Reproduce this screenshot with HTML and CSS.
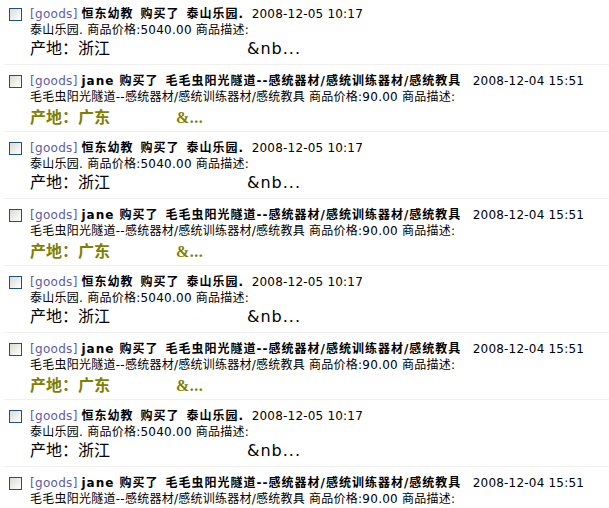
FILE: index.html
```html
<!DOCTYPE html>
<html>
<head>
<meta charset="utf-8">
<link rel="stylesheet" href="styles.css">
</head>
<body>
<ul class="list">
  <li class="item">
    <span class="cb"></span>
    <div class="body">
      <div class="title"><span class="tag">[goods]</span> <b>恒东幼教&ensp;购买了&ensp;泰山乐园.</b>&nbsp; <span class="date">2008-12-05 10:17</span></div>
      <div class="desc">泰山乐园. 商品价格:5040.00 商品描述:</div>
      <div class="detail plain"><span class="lead">产地：浙江</span>&amp;nb...</div>
    </div>
  </li>
  <li class="item">
    <span class="cb"></span>
    <div class="body">
      <div class="title"><span class="tag">[goods]</span> <b>jane 购买了&ensp;毛毛虫阳光隧道--感统器材/感统训练器材/感统教具</b>&nbsp;&nbsp; <span class="date">2008-12-04 15:51</span></div>
      <div class="desc">毛毛虫阳光隧道--感统器材/感统训练器材/感统教具 商品价格:90.00 商品描述:</div>
      <div class="detail olive"><span class="lead">产地：广东</span>&amp;...</div>
    </div>
  </li>
  <li class="item">
    <span class="cb"></span>
    <div class="body">
      <div class="title"><span class="tag">[goods]</span> <b>恒东幼教&ensp;购买了&ensp;泰山乐园.</b>&nbsp; <span class="date">2008-12-05 10:17</span></div>
      <div class="desc">泰山乐园. 商品价格:5040.00 商品描述:</div>
      <div class="detail plain"><span class="lead">产地：浙江</span>&amp;nb...</div>
    </div>
  </li>
  <li class="item">
    <span class="cb"></span>
    <div class="body">
      <div class="title"><span class="tag">[goods]</span> <b>jane 购买了&ensp;毛毛虫阳光隧道--感统器材/感统训练器材/感统教具</b>&nbsp;&nbsp; <span class="date">2008-12-04 15:51</span></div>
      <div class="desc">毛毛虫阳光隧道--感统器材/感统训练器材/感统教具 商品价格:90.00 商品描述:</div>
      <div class="detail olive"><span class="lead">产地：广东</span>&amp;...</div>
    </div>
  </li>
  <li class="item">
    <span class="cb"></span>
    <div class="body">
      <div class="title"><span class="tag">[goods]</span> <b>恒东幼教&ensp;购买了&ensp;泰山乐园.</b>&nbsp; <span class="date">2008-12-05 10:17</span></div>
      <div class="desc">泰山乐园. 商品价格:5040.00 商品描述:</div>
      <div class="detail plain"><span class="lead">产地：浙江</span>&amp;nb...</div>
    </div>
  </li>
  <li class="item">
    <span class="cb"></span>
    <div class="body">
      <div class="title"><span class="tag">[goods]</span> <b>jane 购买了&ensp;毛毛虫阳光隧道--感统器材/感统训练器材/感统教具</b>&nbsp;&nbsp; <span class="date">2008-12-04 15:51</span></div>
      <div class="desc">毛毛虫阳光隧道--感统器材/感统训练器材/感统教具 商品价格:90.00 商品描述:</div>
      <div class="detail olive"><span class="lead">产地：广东</span>&amp;...</div>
    </div>
  </li>
  <li class="item">
    <span class="cb"></span>
    <div class="body">
      <div class="title"><span class="tag">[goods]</span> <b>恒东幼教&ensp;购买了&ensp;泰山乐园.</b>&nbsp; <span class="date">2008-12-05 10:17</span></div>
      <div class="desc">泰山乐园. 商品价格:5040.00 商品描述:</div>
      <div class="detail plain"><span class="lead">产地：浙江</span>&amp;nb...</div>
    </div>
  </li>
  <li class="item">
    <span class="cb"></span>
    <div class="body">
      <div class="title"><span class="tag">[goods]</span> <b>jane 购买了&ensp;毛毛虫阳光隧道--感统器材/感统训练器材/感统教具</b>&nbsp;&nbsp; <span class="date">2008-12-04 15:51</span></div>
      <div class="desc">毛毛虫阳光隧道--感统器材/感统训练器材/感统教具 商品价格:90.00 商品描述:</div>
      <div class="detail olive"><span class="lead">产地：广东</span>&amp;...</div>
    </div>
  </li>
</ul>
</body>
</html>
```
FILE: styles.css
```css
html, body {
  margin: 0;
  padding: 0;
  background: #fff;
}
body {
  font-family: "DejaVu Sans", Verdana, "Noto Sans CJK SC", sans-serif;
  font-size: 12px;
  color: #000;
  overflow: hidden;
}
.list {
  list-style: none;
  margin: -2px 0 0 0;
  padding: 0;
}
.item {
  display: flex;
  margin-left: 4px;
  padding: 8px 0 5px 5px;
  border-bottom: 1px solid #f0f0f0;
  height: 53px;
}
.cb {
  flex: none;
  width: 11px;
  height: 11px;
  margin-top: 2px;
  margin-right: 8px;
  border: 1px solid #1c5180;
  background: linear-gradient(135deg, #dcdcd6 0%, #f4f4f0 70%, #ffffff 100%);
}
.body {
  flex: 1;
  min-width: 0;
  white-space: nowrap;
}
.title {
  line-height: 16px;
  height: 16px;
}
.title b {
  font-family: "DejaVu Sans", "Noto Sans CJK SC", sans-serif;
  font-weight: bold;
  letter-spacing: 1px;
}
.tag {
  color: #5c5ca6;
  letter-spacing: 0.3px;
}
.date {
  letter-spacing: 0.2px;
}
.desc {
  line-height: 17px;
  height: 17px;
  letter-spacing: 0.25px;
}
.detail {
  font-size: 16px;
  line-height: 20px;
  height: 20px;
}
.plain {
  font-family: "DejaVu Sans", "Noto Sans CJK SC", sans-serif;
  letter-spacing: 1px;
}
.plain .lead {
  display: inline-block;
  width: 217px;
  letter-spacing: 0;
}
.olive {
  color: #808000;
  font-weight: bold;
  font-family: "Liberation Serif", "Noto Sans CJK SC", serif;
  letter-spacing: 0.5px;
}
.olive .lead {
  display: inline-block;
  width: 146px;
  letter-spacing: 0;
  font-family: "Noto Sans CJK SC", sans-serif;
}
```
